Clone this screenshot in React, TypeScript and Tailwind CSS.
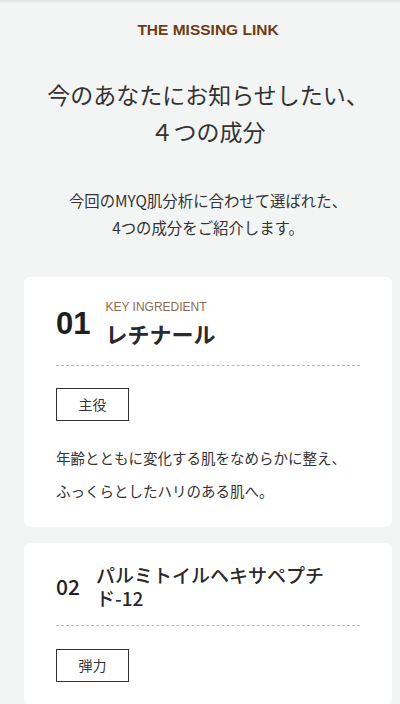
import React from "react"

const jp = "font-['Noto_Sans_CJK_JP',sans-serif]"

interface Ingredient {
  no: string
  name: string
  tag: string
  text?: string[]
  main?: boolean
}

const ingredients: Ingredient[] = [
  {
    no: "01",
    name: "レチナール",
    tag: "主役",
    text: ["年齢とともに変化する肌をなめらかに整え、", "ふっくらとしたハリのある肌へ。"],
    main: true,
  },
  { no: "02", name: "パルミトイルヘキサペプチド-12", tag: "弾力" },
]

function IngredientCard({ item }: { item: Ingredient }) {
  return (
    <div className={`bg-white rounded-md px-8 ${item.main ? "pt-[22px] pb-5" : "pt-5 pb-6"}`}>
      {/* header */}
      <div
        className={`flex items-center border-b border-dashed border-[#b9b9b9] ${
          item.main ? "gap-[15px] pb-[18px]" : "gap-4 pb-4"
        }`}
      >
        <div
          className={
            item.main
              ? "font-['Liberation_Sans',sans-serif] font-bold text-[31px] text-[#1e1e1e] leading-none"
              : `${jp} font-medium text-[21px] text-[#1e1e1e] leading-none`
          }
        >
          {item.no}
        </div>
        <div className="flex flex-col">
          {item.main && (
            <span className="font-['Liberation_Sans',sans-serif] text-[12px] leading-4 text-[#8a6a50]">
              KEY INGREDIENT
            </span>
          )}
          <h3
            className={`${jp} text-[#2a2a2a] ${
              item.main ? "mt-1 text-[22px] font-bold leading-7" : "text-[19px] font-medium leading-[23px] pr-2"
            }`}
          >
            {item.name}
          </h3>
        </div>
      </div>

      {/* tag */}
      <div className={`${item.main ? "mt-[22px]" : "mt-[23px]"} flex`}>
        <span
          className={`${jp} w-[73px] h-[33px] flex items-center justify-center border border-[#333] text-[14px] text-[#333]`}
        >
          {item.tag}
        </span>
      </div>

      {item.text && (
        <p className={`${jp} mt-5 text-[14.5px] leading-[33px] text-[#333]`}>
          {item.text.map((line, i) => (
            <React.Fragment key={i}>
              {line}
              {i < item.text!.length - 1 && <br />}
            </React.Fragment>
          ))}
        </p>
      )}
    </div>
  )
}

export default function App() {
  return (
    <div className="min-h-screen bg-[#f3f5f4] relative">
      {/* top shade */}
      <div className="absolute top-0 left-0 right-0 h-[4px] bg-gradient-to-b from-[#e2e4e3] to-transparent" />

      <div className="pl-6 pr-2 pt-[21px]">
        <div className="text-center font-['Liberation_Sans',sans-serif] font-bold text-[15.5px] leading-[18px] text-[#6e3d16]">
          THE MISSING LINK
        </div>

        <h2 className={`${jp} mt-[37px] text-center text-[23px] leading-[37px] text-[#333]`}>
          今のあなたにお知らせしたい、
          <br />
          ４つの成分
        </h2>

        <p className={`${jp} mt-[37px] text-center text-[15.4px] leading-[27px] text-[#333]`}>
          今回のMYQ肌分析に合わせて選ばれた、
          <br />
          4つの成分をご紹介します。
        </p>

        <div className="mt-[36px] flex flex-col gap-4 pb-6">
          {ingredients.map((item) => (
            <IngredientCard key={item.no} item={item} />
          ))}
        </div>
      </div>
    </div>
  )
}
